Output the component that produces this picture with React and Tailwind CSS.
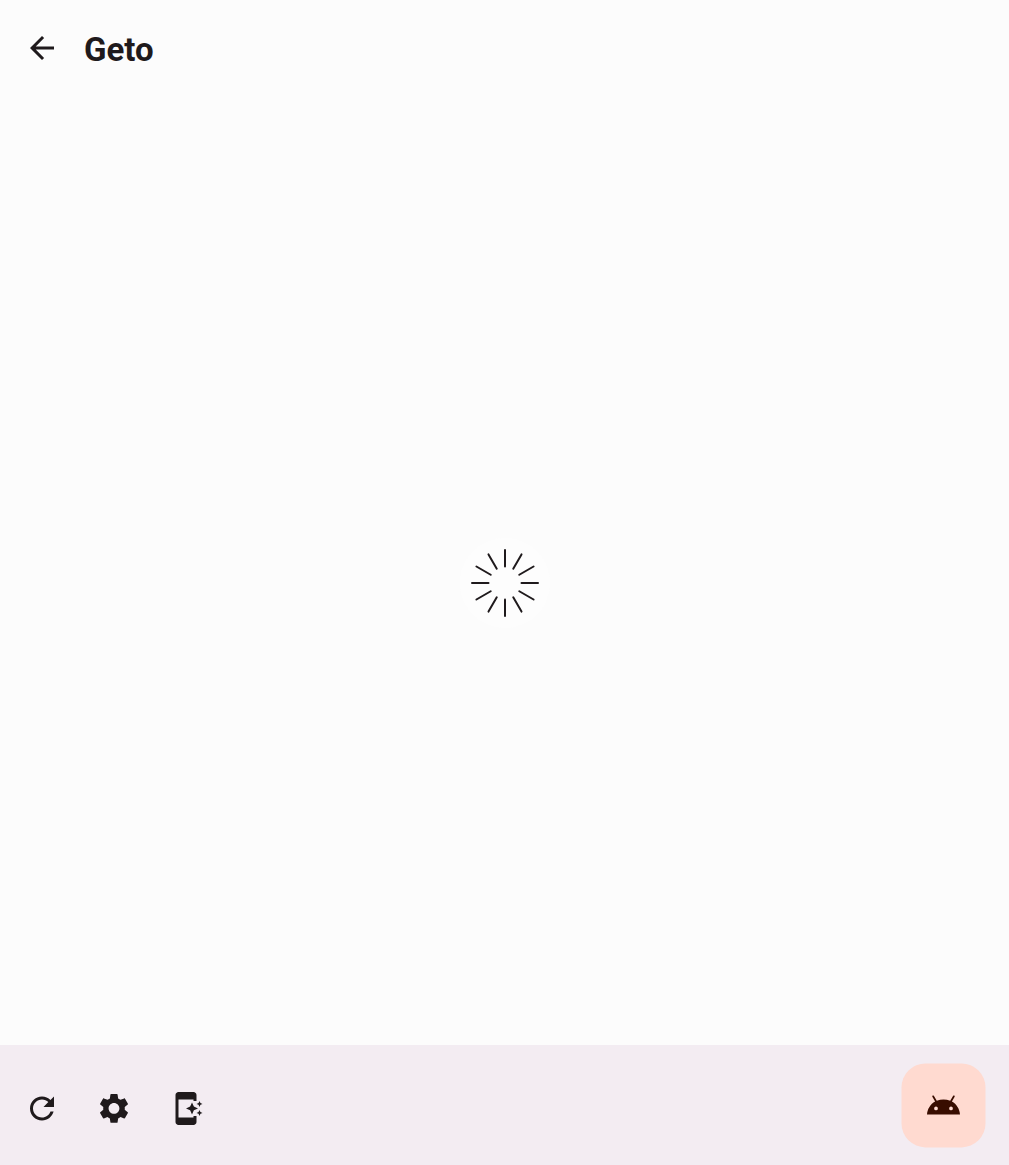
import React from "react";

function Icon({ children, className = "" }) {
  return (
    <svg viewBox="0 0 24 24" fill="currentColor" className={`h-9 w-9 ${className}`}>
      {children}
    </svg>
  );
}

const SPOKES = [0, 30, 60, 90, 120, 150, 180, 210, 240, 270, 300, 330];

function Spinner() {
  return (
    <div className="flex h-[90px] w-[90px] items-center justify-center rounded-full bg-[#fdfdfd]">
      <svg viewBox="-36 -36 72 72" className="h-[72px] w-[72px]" stroke="#1f1a1c" strokeWidth="2" strokeLinecap="round">
        {SPOKES.map((angle) => (
          <line key={angle} x1="0" y1="-16.5" x2="0" y2="-33" transform={`rotate(${angle})`} />
        ))}
      </svg>
    </div>
  );
}

export default function App() {
  return (
    <div className="flex h-screen w-full flex-col bg-[#fcfcfc] font-['Roboto',sans-serif] text-[#1f1a1c]">
      <header className="flex h-24 shrink-0 items-center pl-6">
        <button aria-label="Back">
          <Icon className="block">
            <path d="M20 11H7.83l5.59-5.59L12 4l-8 8 8 8 1.41-1.41L7.83 13H20v-2z" />
          </Icon>
        </button>
        <h1 className="ml-6 mt-1 text-[33px] font-bold leading-[42px]">Geto</h1>
      </header>
      <main className="flex flex-1 items-center justify-center pt-[25px]">
        <Spinner />
      </main>
      <footer className="flex h-[120px] shrink-0 items-start justify-between bg-[#f3ecf2] pl-6 pr-6 pt-[18px]">
        <div className="mt-[27px] flex translate-y-[0.4px] gap-9">
          <button aria-label="Refresh">
            <Icon>
              <path d="M17.65 6.35C16.2 4.9 14.21 4 12 4c-4.42 0-7.99 3.58-7.99 8s3.57 8 7.99 8c3.73 0 6.84-2.55 7.73-6h-2.08c-.82 2.33-3.04 4-5.65 4-3.31 0-6-2.69-6-6s2.69-6 6-6c1.66 0 3.14.69 4.22 1.78L13 11h7V4l-2.35 2.35z" />
            </Icon>
          </button>
          <button aria-label="Settings">
            <Icon>
              <path d="M19.14 12.94c.04-.3.06-.61.06-.94 0-.32-.02-.64-.07-.94l2.03-1.58c.18-.14.23-.41.12-.61l-1.92-3.32c-.12-.22-.37-.29-.59-.22l-2.39.96c-.5-.38-1.03-.7-1.62-.94l-.36-2.54c-.04-.24-.24-.41-.48-.41h-3.84c-.24 0-.43.17-.47.41l-.36 2.54c-.59.24-1.13.57-1.62.94l-2.39-.96c-.22-.08-.47 0-.59.22L2.74 8.87c-.12.21-.08.47.12.61l2.03 1.58c-.05.3-.09.63-.09.94s.02.64.07.94l-2.03 1.58c-.18.14-.23.41-.12.61l1.92 3.32c.12.22.37.29.59.22l2.39-.96c.5.38 1.03.7 1.62.94l.36 2.54c.05.24.24.41.48.41h3.84c.24 0 .44-.17.47-.41l.36-2.54c.59-.24 1.13-.56 1.62-.94l2.39.96c.22.08.47 0 .59-.22l1.92-3.32c.12-.22.07-.47-.12-.61l-2.01-1.58zM12 15.6c-1.98 0-3.6-1.62-3.6-3.6s1.62-3.6 3.6-3.6 3.6 1.62 3.6 3.6-1.62 3.6-3.6 3.6z" />
            </Icon>
          </button>
          <button aria-label="Add shortcut">
            <Icon>
              <path d="M17 18H7V6h10v1h2V3c0-1.1-.9-2-2-2H7c-1.1 0-2 .9-2 2v18c0 1.1.9 2 2 2h10c1.1 0 2-.9 2-2v-4h-2v1z" />
              <path d="M20.38 9.62 21 11l.62-1.38L23 9l-1.38-.62L21 7l-.62 1.38L19 9zM16 8l-1.25 2.75L12 12l2.75 1.25L16 16l1.25-2.75L20 12l-2.75-1.25zM21 13l-.62 1.38L19 15l1.38.62L21 17l.62-1.38L23 15l-1.38-.62z" />
            </Icon>
          </button>
        </div>
        <button aria-label="Launch app" className="flex h-[84px] w-[84px] translate-x-[0.5px] translate-y-[0.4px] items-center justify-center rounded-3xl bg-[#ffdad0] text-[#380d00]">
          <Icon>
            <path d="M17.6 9.48l1.84-3.18c.16-.31.04-.69-.26-.85-.29-.15-.65-.06-.83.22l-1.88 3.24c-2.86-1.21-6.08-1.21-8.94 0L5.65 5.67c-.19-.29-.58-.38-.87-.2-.28.18-.37.54-.22.83L6.4 9.48C3.3 11.25 1.28 14.44 1 18h22c-.28-3.56-2.3-6.75-5.4-8.52zM7 15.25a1.25 1.25 0 1 1 0-2.5 1.25 1.25 0 0 1 0 2.5zm10 0a1.25 1.25 0 1 1 0-2.5 1.25 1.25 0 0 1 0 2.5z" />
          </Icon>
        </button>
      </footer>
    </div>
  );
}
